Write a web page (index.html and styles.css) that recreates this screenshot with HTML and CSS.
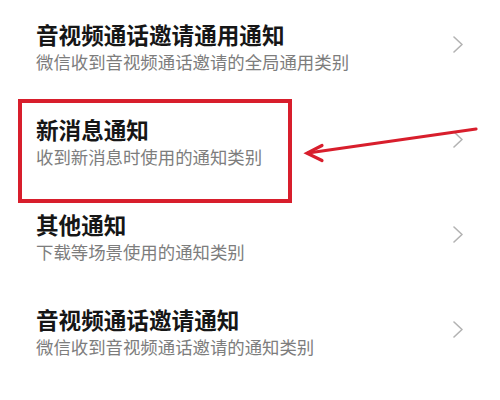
FILE: index.html
```html
<!DOCTYPE html>
<html lang="zh-CN">
<head>
<meta charset="utf-8">
<title>通知类别</title>
<link rel="stylesheet" href="styles.css">
</head>
<body>
<div class="page">
  <ul class="list">
    <li class="row">
      <div class="text">
        <div class="title">音视频通话邀请通用通知</div>
        <div class="sub">微信收到音视频通话邀请的全局通用类别</div>
      </div>
      <svg class="chev" viewBox="0 0 10 17" width="10" height="17"><polyline points="1,1 9,8.5 1,16" /></svg>
    </li>
    <li class="row">
      <div class="text">
        <div class="title">新消息通知</div>
        <div class="sub">收到新消息时使用的通知类别</div>
      </div>
      <svg class="chev" viewBox="0 0 10 17" width="10" height="17"><polyline points="1,1 9,8.5 1,16" /></svg>
    </li>
    <li class="row">
      <div class="text">
        <div class="title">其他通知</div>
        <div class="sub">下载等场景使用的通知类别</div>
      </div>
      <svg class="chev" viewBox="0 0 10 17" width="10" height="17"><polyline points="1,1 9,8.5 1,16" /></svg>
    </li>
    <li class="row">
      <div class="text">
        <div class="title">音视频通话邀请通知</div>
        <div class="sub">微信收到音视频通话邀请的通知类别</div>
      </div>
      <svg class="chev" viewBox="0 0 10 17" width="10" height="17"><polyline points="1,1 9,8.5 1,16" /></svg>
    </li>
  </ul>
  <div class="mark-box"></div>
  <svg class="mark-arrow" viewBox="0 0 500 400" width="500" height="400">
    <line x1="476" y1="129" x2="308" y2="153" />
    <polyline points="322,145.5 307,153.2 322,160.5" />
  </svg>
</div>
</body>
</html>
```

FILE: styles.css
```css
html, body {
  margin: 0;
  padding: 0;
  background: #ffffff;
}

.page {
  position: relative;
  width: 500px;
  height: 400px;
  overflow: hidden;
  font-family: "Noto Sans CJK SC", "Noto Sans", sans-serif;
}

.list {
  list-style: none;
  margin: 0;
  padding: 0;
}

.row {
  height: 95px;
  display: flex;
  align-items: center;
  justify-content: space-between;
  padding: 0 37px 0 36px;
}

.text {
  display: flex;
  flex-direction: column;
}

.title {
  font-size: 22.6px;
  line-height: 28px;
  font-weight: 600;
  color: #161616;
}

.sub {
  font-size: 17.4px;
  line-height: 26px;
  color: #7d7d7d;
}

.chev {
  margin-bottom: 6px;
  flex: none;
}

.chev polyline {
  fill: none;
  stroke: #b3b3b3;
  stroke-width: 1.6;
  stroke-linecap: round;
  stroke-linejoin: round;
}

.mark-box {
  position: absolute;
  left: 18px;
  top: 99px;
  width: 266px;
  height: 96px;
  border: 4px solid #d81e2c;
}

.mark-arrow {
  position: absolute;
  left: 0;
  top: 0;
}

.mark-arrow line,
.mark-arrow polyline {
  fill: none;
  stroke: #d81e2c;
  stroke-width: 3.2;
  stroke-linecap: round;
  stroke-linejoin: miter;
}
```
